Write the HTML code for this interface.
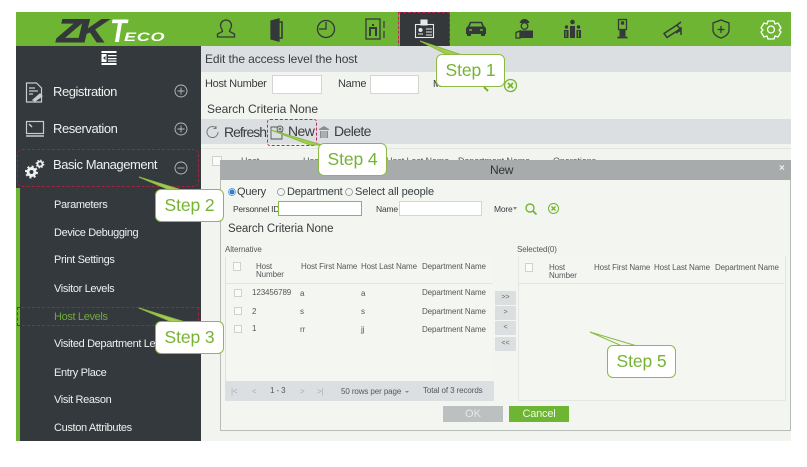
<!DOCTYPE html>
<html><head><meta charset="utf-8">
<style>
html,body{margin:0;padding:0;background:#fff}
#p{position:relative;width:807px;height:467px;overflow:hidden;background:#fff;font-family:"Liberation Sans",sans-serif;color:#3a3d3f}
#p div,#p span.t,#p svg{position:absolute}
.t{white-space:nowrap;line-height:1}
.b{background:#fff;border:1px solid #d4d6d4;box-sizing:border-box}
.n{color:#eef0f0;font-size:11px;letter-spacing:-.35px}
.m{color:#eef0f0;font-size:13px;letter-spacing:-.45px}
.s{font-size:8px;color:#55585a;letter-spacing:-.1px}
.h{font-size:8px;color:#55585a;letter-spacing:-.1px;line-height:8px}
.c{background:#fbfcfa;border:1px solid #d0d2d0;box-sizing:border-box;width:8px;height:8px}
.st{background:#fff;border:1px solid #8cba45;border-radius:6px;box-sizing:border-box;color:#76b335;font-size:17.5px;text-align:center;line-height:31px;letter-spacing:-.1px}
.ar{background:#dcdfe0;width:21px;height:14px;left:495px;color:#666;font-size:7px;text-align:center;line-height:14px}
</style></head><body><div id="p">

<!-- header -->
<div style="left:16px;top:12px;width:775px;height:34px;background:#6db533"></div>
<span class="t" style="left:57px;top:15px;font-size:32px;font-weight:bold;font-style:italic;color:#34383b;letter-spacing:-3px;transform:scaleX(1.25);transform-origin:0 0;-webkit-text-stroke:1px #34383b">ZK</span>
<span class="t" style="left:110px;top:15px;font-size:32px;font-weight:bold;font-style:italic;color:#fff;transform:scaleX(.85);transform-origin:0 0">T</span>
<span class="t" style="left:124px;top:31px;font-size:12px;font-weight:bold;font-style:italic;color:#fff;letter-spacing:.5px;transform:scaleX(1.5);transform-origin:0 0">ECO</span>

<svg style="left:16px;top:12px" width="775" height="34" viewBox="16 12 775 34" fill="none" stroke="#34383b" stroke-width="1.3">
<path d="M226 20a5.500 5.500 0 0 1 5.500 5.500c0 2.500-2 4-2 6l5 2.500v3h-17v-3l5-2.500c0-2-2-3.500-2-6A5.500 5.500 0 0 1 226 20z"/>
<path d="M271 21l8-2v22l-8-2z" fill="#34383b"/><path d="M279 22h3v16h-3" stroke-width="1.600"/>
<circle cx="326" cy="29" r="8.500"/><path d="M326 22v7h-7"/>
<rect x="366" y="19" width="14" height="20"/><path d="M370 36v-8h6v8M373 24v2" stroke-width="2"/><path d="M384 21v7M384 31v7" stroke-width="1.200"/>
</svg>

<div style="left:400px;top:12px;width:50px;height:34px;background:#34383b"></div>
<div style="left:398px;top:12px;width:52px;height:36px;border:1px dashed #c2255a;box-sizing:border-box;border-radius:1px"></div>
<svg style="left:412px;top:18px" width="26" height="24" viewBox="0 0 26 24" fill="none" stroke="#e8e8e8" stroke-width="1.100">
<rect x="3.500" y="6.500" width="18" height="13"/><path d="M6 16h5M14 11h6M14 14h6M14 17h6"/><circle cx="8.500" cy="12" r="1.500" fill="#e8e8e8"/><path d="M9 2h6v5H9z" fill="#e8e8e8"/>
</svg>

<svg style="left:450px;top:12px" width="341" height="34" viewBox="450 12 341 34" fill="none" stroke="#34383b" stroke-width="1.300">
<path d="M468.500 27l2-4.500h11l2 4.500" stroke-width="1.600"/><path d="M466 34v-5c0-1.500 1-2.500 2-2.500h16c1 0 2 1 2 2.500v5z" fill="#34383b" stroke="none"/><path d="M467 34h4v2h-4zM481 34h4v2h-4z" fill="#34383b" stroke="none"/><path d="M469 30h3M480 30h3" stroke="#6db533" stroke-width="1.400"/>
<circle cx="524.500" cy="26" r="3.300"/><path d="M519.500 23c1-3 3-4 5-4s4 1 5 4z" fill="#34383b" stroke="none"/><path d="M520 38v-7l-4 1.500v5.500z"/><path d="M520 38v-7.500h13V38z" fill="#34383b" stroke="none"/>
<path d="M564 38v-8h4.500v8zM570 38v-12h5v12zM576.500 38v-8h4.500v8z" fill="#34383b" stroke="none"/><circle cx="572.500" cy="22" r="2.300" fill="#34383b" stroke="none"/><circle cx="566.500" cy="27" r="1.700" fill="#34383b" stroke="none"/><circle cx="578.500" cy="27" r="1.700" fill="#34383b" stroke="none"/><path d="M566 31v6M578.500 31v6" stroke="#6db533" stroke-width=".8"/>
<rect x="618.500" y="19.500" width="8" height="10"/><path d="M619.500 30h6v6.500h-6z" fill="#34383b" stroke="none"/><path d="M617.500 37.500h10" stroke-width="1.800"/><rect x="621.500" y="22" width="2" height="2" fill="#34383b"/>
<path d="M664 33.500l13-8.500 3 4-13 8.500zM677 25l4-3M681 27v8M676 33l5-3" stroke-width="1.500"/>
<path d="M721 20l8 3v7c0 4-4 7-8 8-4-1-8-4-8-8v-7z"/><path d="M717.500 29.500h7M721 26v7"/>
<circle cx="771" cy="29.500" r="3.500" stroke="#fff"/><path d="M768 21l6 0 1 3 3-1 3 5-2 2 2 2-3 5-3-1-1 3h-6l-1-3-3 1-3-5 2-2-2-2 3-5 3 1z" stroke="#fff" stroke-linejoin="round"/>
</svg>

<!-- sidebar -->
<div style="left:16px;top:46px;width:185px;height:395px;background:#34393d"></div>
<div style="left:16px;top:188px;width:4px;height:253px;background:#6db533"></div>
<svg style="left:100px;top:49px" width="18" height="18" viewBox="0 0 18 18" fill="#fff"><path d="M1.500 2h15v2h-15zM1.500 14h15v2h-15zM8 6h8.500v1.300H8zM8 9h8.500v1.300H8zM8 11.500h8.500v1.300H8zM1.500 5h5v8h-5z"/><path d="M5.500 7L3 9l2.500 2z" fill="#34393d"/></svg>

<svg style="left:24px;top:80px" width="22" height="24" viewBox="0 0 22 24" fill="none" stroke="#c8cccc" stroke-width="1.200"><path d="M2.500 3h10l5 5v14h-15z"/><path d="M5 8h6M5 11h9M5 14h4" /><path d="M9 20l7-6 2 2-7 5z" fill="#c8cccc"/></svg>
<span class="t m" style="left:53px;top:85px;font-size:13px">Registration</span>
<svg style="left:174px;top:84px" width="14" height="14" fill="none" stroke="#b8bcbc" stroke-width=".9"><circle cx="7" cy="7" r="6"/><path d="M3.500 7h7M7 3.500v7"/></svg>

<svg style="left:24px;top:119px" width="22" height="20" viewBox="0 0 22 20" fill="none" stroke="#c8cccc" stroke-width="1.200"><rect x="2.500" y="2.500" width="17" height="12"/><path d="M5 5l3 3M2 17h18" stroke-width="1.500"/></svg>
<span class="t m" style="left:53px;top:122px;font-size:13px">Reservation</span>
<svg style="left:174px;top:122px" width="14" height="14" fill="none" stroke="#b8bcbc" stroke-width=".9"><circle cx="7" cy="7" r="6"/><path d="M3.500 7h7M7 3.500v7"/></svg>

<div style="left:17px;top:149px;width:182px;height:38px;border:1px dashed #a52240;border-radius:5px;box-sizing:border-box"></div>
<svg style="left:24px;top:158px" width="22" height="22" viewBox="0 0 22 22" fill="none" stroke="#f0f0f0"><circle cx="7.500" cy="14" r="3.500" stroke-width="3"/><circle cx="7.500" cy="14" r="5.500" stroke-width="2" stroke-dasharray="2 2.300"/><circle cx="16" cy="6" r="2.500" stroke-width="1.800"/><circle cx="16" cy="6" r="3.800" stroke-width="1.200" stroke-dasharray="1.500 1.500"/></svg>
<span class="t m" style="left:53px;top:158px;font-size:13px">Basic Management</span>
<svg style="left:174px;top:161px" width="14" height="14" fill="none" stroke="#b8bcbc" stroke-width=".9"><circle cx="7" cy="7" r="6"/><path d="M3.500 7h7"/></svg>

<span class="t n" style="left:54px;top:200px">Parameters</span>
<span class="t n" style="left:54px;top:228px">Device Debugging</span>
<span class="t n" style="left:54px;top:255px">Print Settings</span>
<span class="t n" style="left:54px;top:284px">Visitor Levels</span>
<div style="left:17px;top:307px;width:182px;height:19px;border:1px dashed #a52240;box-sizing:border-box"></div>
<span class="t n" style="left:54px;top:312px;color:#72a83a">Host Levels</span>
<span class="t n" style="left:54px;top:339px">Visited Department Levels</span>
<span class="t n" style="left:54px;top:368px">Entry Place</span>
<span class="t n" style="left:54px;top:395px">Visit Reason</span>
<span class="t n" style="left:54px;top:423px">Custon Attributes</span>

<!-- content -->
<div style="left:201px;top:46px;width:590px;height:395px;background:#f2f4f0"></div>
<div style="left:201px;top:46px;width:590px;height:26px;background:#dcdfe1"></div>
<span class="t" style="left:205px;top:53px;font-size:12px;letter-spacing:-.1px">Edit the access level the host</span>
<span class="t" style="left:205px;top:79px;font-size:11px;letter-spacing:-.3px">Host Number</span>
<div class="b" style="left:272px;top:75px;width:50px;height:19px"></div>
<span class="t" style="left:338px;top:79px;font-size:11px;letter-spacing:-.3px">Name</span>
<div class="b" style="left:370px;top:75px;width:49px;height:19px"></div>
<span class="t" style="left:433px;top:80px;font-size:10px">More</span>
<svg style="left:474px;top:84px" width="16" height="8" fill="none" stroke="#76b335" stroke-width="2"><path d="M4 0l3 2M10 3l4 4"/></svg>
<svg style="left:502px;top:77px" width="17" height="17" fill="none" stroke="#76b335" stroke-width="1.300"><circle cx="8.500" cy="8.500" r="6"/><path d="M6 6l5 5M11 6l-5 5" stroke-width="1.800"/></svg>
<span class="t" style="left:207px;top:103px;font-size:12px;letter-spacing:-.05px">Search Criteria None</span>

<div style="left:201px;top:119px;width:590px;height:25px;background:#dcdfe1"></div>
<svg style="left:206px;top:125px" width="14" height="14" fill="none" stroke="#777" stroke-width="1"><path d="M12 7a5.500 5.500 0 1 1-2-4.200M10 1v2.500H7.500"/></svg>
<span class="t" style="left:224px;top:125px;font-size:14px;letter-spacing:-1px">Refresh</span>
<svg style="left:269px;top:124px" width="17" height="17" fill="none" stroke="#555" stroke-width=".9"><path d="M2 3h8l3 3v9H2z"/><circle cx="11" cy="5" r="3" fill="#dcdfe1"/><path d="M11 3.500v3M9.500 5h3"/></svg>
<span class="t" style="left:288px;top:124px;font-size:14px;letter-spacing:-.6px">New</span>
<svg style="left:316px;top:124px" width="16" height="16" fill="#8a8d8c"><path d="M3 5l5-3 5 3v1H3zM4 7h8v7H4z"/><path d="M6 7v7M8 7v7M10 7v7" stroke="#dcdfe1" stroke-width=".8"/></svg>
<span class="t" style="left:334px;top:124px;font-size:14px;letter-spacing:-.6px">Delete</span>
<div style="left:267px;top:119px;width:50px;height:27px;border:1px dashed #c2255a;border-radius:3px;box-sizing:border-box"></div>

<div style="left:201px;top:148px;width:590px;height:1px;background:#e4e6e4"></div>
<div class="c" style="left:212px;top:156px;width:10px;height:10px"></div>
<span class="t s" style="left:241px;top:157px;font-size:9px">Host</span>
<span class="t s" style="left:303px;top:157px;font-size:9px">Hos</span>
<span class="t s" style="left:386px;top:157px;font-size:9px">Host Last Name</span>
<span class="t s" style="left:458px;top:157px;font-size:9px">Department Name</span>
<span class="t s" style="left:553px;top:157px;font-size:9px">Operations</span>

<!-- dialog -->
<div style="left:220px;top:160px;width:571px;height:271px;background:#f2f5f0;border:1px solid #b8bcb8;border-top:0;box-sizing:border-box"></div>
<div style="left:220px;top:160px;width:571px;height:20px;background:#a7abab"></div>
<span class="t" style="left:490px;top:164px;font-size:12px;letter-spacing:-.3px;color:#333">New</span>
<span class="t" style="left:779px;top:164px;font-size:10px;color:#eee;font-weight:bold">×</span>

<svg style="left:227px;top:187px" width="120" height="11" fill="none" stroke="#888" stroke-width=".7"><circle cx="5" cy="5" r="3.500" stroke="#4a8fd0"/><circle cx="5" cy="5" r="2.500" fill="#2f7fd0" stroke="none"/><circle cx="54" cy="5" r="3.500"/></svg>
<svg style="left:344px;top:187px" width="10" height="11" fill="none" stroke="#888" stroke-width=".7"><circle cx="5" cy="5" r="3.500"/></svg>
<span class="t" style="left:237px;top:187px;font-size:11px;letter-spacing:-.2px">Query</span>
<span class="t" style="left:287px;top:187px;font-size:11px;letter-spacing:-.2px">Department</span>
<span class="t" style="left:355px;top:187px;font-size:11px;letter-spacing:-.1px">Select all people</span>
<span class="t" style="left:233px;top:205px;font-size:8.500px;letter-spacing:-.25px">Personnel ID</span>
<div style="left:278px;top:201px;width:84px;height:15px;background:#fff;border:1px solid #8cba45;box-sizing:border-box"></div>
<span class="t" style="left:376px;top:205px;font-size:8.500px;letter-spacing:-.2px">Name</span>
<div class="b" style="left:399px;top:201px;width:83px;height:15px"></div>
<span class="t" style="left:494px;top:205px;font-size:8.500px;letter-spacing:-.2px">More</span>
<div style="left:513px;top:207px;width:0;height:0;border:2.500px solid transparent;border-top:3px solid #888"></div>
<svg style="left:524px;top:202px" width="14" height="14" fill="none" stroke="#76b335" stroke-width="1.400"><circle cx="6" cy="6" r="4"/><path d="M9 9l3.500 3.500" stroke-width="1.800"/></svg>
<svg style="left:547px;top:202px" width="13" height="13" fill="none" stroke="#76b335" stroke-width="1"><circle cx="6.500" cy="6.500" r="5"/><path d="M4.500 4.500l4 4M8.500 4.500l-4 4" stroke-width="1.400"/></svg>
<span class="t" style="left:228px;top:224px;font-size:11.500px;letter-spacing:-.1px">Search Criteria None</span>

<span class="t s" style="left:225px;top:246px">Alternative</span>
<div style="left:225px;top:257px;width:268px;height:144px;background:#f4f6f2;border-left:1px solid #e0e2df;box-sizing:border-box"></div>
<div style="left:226px;top:283px;width:267px;height:1px;background:#e2e4e1"></div>
<div class="c" style="left:233px;top:262px;width:8px;height:9px"></div>
<span class="t h" style="left:256px;top:263px">Host<br>Number</span>
<span class="t s" style="left:301px;top:263px">Host First Name</span>
<span class="t s" style="left:361px;top:263px">Host Last Name</span>
<span class="t s" style="left:422px;top:263px">Department Name</span>

<div class="c" style="left:234px;top:289px"></div>
<span class="t s" style="left:252px;top:289px">123456789</span><span class="t s" style="left:300px;top:290px">a</span><span class="t s" style="left:361px;top:290px">a</span><span class="t s" style="left:422px;top:289px">Department Name</span>
<div class="c" style="left:234px;top:307px"></div>
<span class="t s" style="left:252px;top:308px">2</span><span class="t s" style="left:300px;top:308px">s</span><span class="t s" style="left:361px;top:308px">s</span><span class="t s" style="left:422px;top:308px">Department Name</span>
<div class="c" style="left:234px;top:325px"></div>
<span class="t s" style="left:252px;top:325px">1</span><span class="t s" style="left:300px;top:326px">rr</span><span class="t s" style="left:361px;top:326px">jj</span><span class="t s" style="left:422px;top:326px">Department Name</span>

<div style="left:225px;top:381px;width:269px;height:20px;background:#dcdfe1"></div>
<span class="t s" style="left:231px;top:388px;color:#aaa">|&lt;</span><span class="t s" style="left:252px;top:388px;color:#aaa">&lt;</span>
<span class="t s" style="left:270px;top:387px">1 - 3</span>
<span class="t s" style="left:300px;top:388px;color:#aaa">&gt;</span><span class="t s" style="left:317px;top:388px;color:#aaa">&gt;|</span>
<span class="t s" style="left:341px;top:388px">50 rows per page</span>
<div style="left:405px;top:391px;width:0;height:0;border:2px solid transparent;border-top:2.500px solid #888"></div>
<span class="t s" style="left:423px;top:387px">Total of 3 records</span>

<div class="ar" style="top:291px">&gt;&gt;</div>
<div class="ar" style="top:306px">&gt;</div>
<div class="ar" style="top:321px">&lt;</div>
<div class="ar" style="top:337px">&lt;&lt;</div>

<span class="t s" style="left:517px;top:246px">Selected(0)</span>
<div style="left:518px;top:256px;width:268px;height:145px;background:#f4f6f2;border:1px solid #e4e6e3;border-top:0;box-sizing:border-box"></div>
<div style="left:519px;top:283px;width:265px;height:1px;background:#e2e4e1"></div>
<div class="c" style="left:525px;top:263px;width:8px;height:9px"></div>
<span class="t h" style="left:549px;top:264px">Host<br>Number</span>
<span class="t s" style="left:594px;top:264px">Host First Name</span>
<span class="t s" style="left:654px;top:264px">Host Last Name</span>
<span class="t s" style="left:715px;top:264px">Department Name</span>

<div style="left:443px;top:406px;width:60px;height:16px;background:#bcc0c0;color:#e6e8e8;font-size:11px;text-align:center;line-height:16px">OK</div>
<div style="left:509px;top:406px;width:60px;height:16px;background:#6db533;color:#f0f6ea;font-size:11px;text-align:center;line-height:16px;letter-spacing:-.2px">Cancel</div>

<!-- callouts -->
<svg style="left:0;top:0" width="807" height="467" fill="#fff" stroke="#8cba45" stroke-width="1">
<path d="M420 41L465 56 450 56z" fill="#a5cc4f"/>
<path d="M271 130L322 145 310 145z" fill="#a5cc4f"/>
<path d="M139 177L185 191 172 191z" fill="#a5cc4f"/>
<path d="M139 308L185 322 172 322z" fill="#a5cc4f"/>
<path d="M590 332L637 346 622 346z" fill="none"/>
</svg>
<div class="st" style="left:436px;top:54px;width:69px;height:33px">Step 1</div>
<div class="st" style="left:318px;top:143px;width:69px;height:33px">Step 4</div>
<div class="st" style="left:155px;top:189px;width:69px;height:33px">Step 2</div>
<div class="st" style="left:155px;top:321px;width:69px;height:33px">Step 3</div>
<div class="st" style="left:607px;top:345px;width:69px;height:33px">Step 5</div>

</div></body></html>
